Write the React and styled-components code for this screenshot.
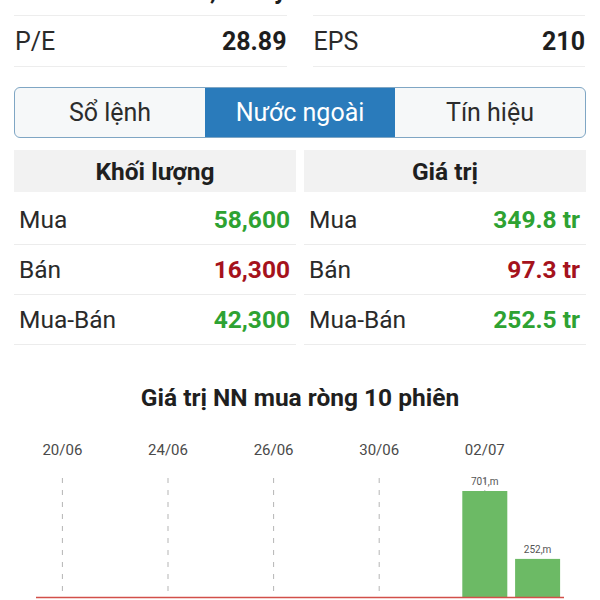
import React, { useState } from 'react';
import styled, { createGlobalStyle } from 'styled-components';

const GlobalStyle = createGlobalStyle`
  html, body {
    margin: 0;
    padding: 0;
    background: #ffffff;
  }
  body {
    font-family: Roboto, "Noto Sans", "Liberation Sans", sans-serif;
    color: #222;
  }
`;

const Screen = styled.div`
  width: 600px;
  height: 600px;
  overflow: hidden;
  background: #fff;
`;

const Content = styled.div`
  margin-top: -35px;
  padding: 0 14px;
`;

const InfoGrid = styled.div`
  display: grid;
  grid-template-columns: 1fr 1fr;
  column-gap: 26px;
  padding-right: 1px;
`;

const InfoRow = styled.div`
  height: 50px;
  display: flex;
  align-items: center;
  justify-content: space-between;
  border-bottom: 1px solid #ededed;
  font-size: 25px;
`;

const InfoLabel = styled.span`
  color: #2a2a2a;
  padding-left: 1px;
`;

const InfoValue = styled.span`
  font-weight: 700;
  color: #1e1e1e;
`;

const Tabs = styled.div`
  margin-top: 20px;
  height: 49px;
  display: grid;
  grid-template-columns: 1fr 1fr 1fr;
  border: 1px solid #7fa6c4;
  border-radius: 6px;
  overflow: hidden;
  background: #f6f8f9;
`;

const Tab = styled.button`
  border: none;
  margin: 0;
  padding: 0;
  font-family: inherit;
  font-size: 25px;
  background: ${p => (p.active ? '#2a7bbb' : 'transparent')};
  color: ${p => (p.active ? '#ffffff' : '#2c2c2c')};
  cursor: pointer;
`;

const Tables = styled.div`
  margin-top: 12px;
  display: grid;
  grid-template-columns: 1fr 1fr;
  column-gap: 8px;
`;

const Column = styled.div`
  display: flex;
  flex-direction: column;
`;

const HeadCell = styled.div`
  height: 42px;
  margin-bottom: 3px;
  background: #f2f2f2;
  display: flex;
  align-items: center;
  justify-content: center;
  font-size: 24.5px;
  font-weight: 700;
  color: #1f1f1f;
`;

const Row = styled.div`
  height: 49px;
  display: flex;
  align-items: center;
  justify-content: space-between;
  padding: 0 6px 0 5px;
  border-bottom: 1px solid #ececec;
  font-size: 24.5px;
`;

const RowLabel = styled.span`
  color: #2a2a2a;
`;

const RowValue = styled.span`
  font-weight: 700;
  color: ${p => (p.tone === 'down' ? '#a5121c' : '#2ea232')};
`;

const ChartTitle = styled.h2`
  margin: 38px 0 0;
  text-align: center;
  font-size: 24.5px;
  font-weight: 700;
  color: #1f1f1f;
  line-height: 30px;
`;

const ChartBox = styled.div`
  margin: 13px -14px 0;
  height: 180px;
`;

const sessions = [
  { d: '20/06', v: 0 },
  { d: '21/06', v: 0 },
  { d: '24/06', v: 0 },
  { d: '25/06', v: 0 },
  { d: '26/06', v: 0 },
  { d: '27/06', v: 0 },
  { d: '30/06', v: 0 },
  { d: '01/07', v: 0 },
  { d: '02/07', v: 701 },
  { d: '03/07', v: 252 },
];

const NetChart = () => {
  const left = 36;
  const slot = 52.8;
  const base = 171;
  const scale = 106 / 701;
  return (
    <svg width="600" height="180" viewBox="0 0 600 180">
      {sessions.map((s, i) => {
        const cx = left + slot * (i + 0.5);
        if (i % 2 !== 0) return null;
        return (
          <g key={s.d}>
            <text x={cx} y={29} textAnchor="middle" fontSize="15" fill="#4a4a4a"
              fontFamily="Roboto, sans-serif">{s.d}</text>
            <line x1={cx} y1={52} x2={cx} y2={base} stroke="#b5b5b5"
              strokeWidth="1" strokeDasharray="5 7" />
          </g>
        );
      })}
      {sessions.map((s, i) => {
        if (!s.v) return null;
        const cx = left + slot * (i + 0.5);
        const h = s.v * scale;
        return (
          <g key={'b' + s.d}>
            <rect x={cx - 22.5} y={base - h} width="45" height={h} fill="#6cba65" />
            <text x={cx} y={base - h - 6} textAnchor="middle" fontSize="10"
              fill="#555" fontFamily="Roboto, sans-serif">{s.v},m</text>
          </g>
        );
      })}
      <line x1={left} y1={base + 0.5} x2={left + slot * 10} y2={base + 0.5}
        stroke="#d2504a" strokeWidth="1.5" />
    </svg>
  );
};

const App = () => {
  const [tab, setTab] = useState('foreign');

  const tabs = [
    { id: 'book', label: 'Sổ lệnh' },
    { id: 'foreign', label: 'Nước ngoài' },
    { id: 'signal', label: 'Tín hiệu' },
  ];

  return (
    <Screen>
      <GlobalStyle />
      <Content>
        <InfoGrid>
          <InfoRow><InfoLabel>Vốn hóa</InfoLabel><InfoValue>1,986 tỷ</InfoValue></InfoRow>
          <InfoRow><InfoLabel>KLCP</InfoLabel><InfoValue>26.2 tr</InfoValue></InfoRow>
          <InfoRow><InfoLabel>P/E</InfoLabel><InfoValue>28.89</InfoValue></InfoRow>
          <InfoRow><InfoLabel>EPS</InfoLabel><InfoValue>210</InfoValue></InfoRow>
        </InfoGrid>

        <Tabs>
          {tabs.map(t => (
            <Tab key={t.id} active={tab === t.id} onClick={() => setTab(t.id)}>
              {t.label}
            </Tab>
          ))}
        </Tabs>

        <Tables>
          <Column>
            <HeadCell>Khối lượng</HeadCell>
            <Row><RowLabel>Mua</RowLabel><RowValue>58,600</RowValue></Row>
            <Row><RowLabel>Bán</RowLabel><RowValue tone="down">16,300</RowValue></Row>
            <Row><RowLabel>Mua-Bán</RowLabel><RowValue>42,300</RowValue></Row>
          </Column>
          <Column>
            <HeadCell>Giá trị</HeadCell>
            <Row><RowLabel>Mua</RowLabel><RowValue>349.8 tr</RowValue></Row>
            <Row><RowLabel>Bán</RowLabel><RowValue tone="down">97.3 tr</RowValue></Row>
            <Row><RowLabel>Mua-Bán</RowLabel><RowValue>252.5 tr</RowValue></Row>
          </Column>
        </Tables>

        <ChartTitle>Giá trị NN mua ròng 10 phiên</ChartTitle>
        <ChartBox>
          <NetChart />
        </ChartBox>
      </Content>
    </Screen>
  );
};

export default App;
